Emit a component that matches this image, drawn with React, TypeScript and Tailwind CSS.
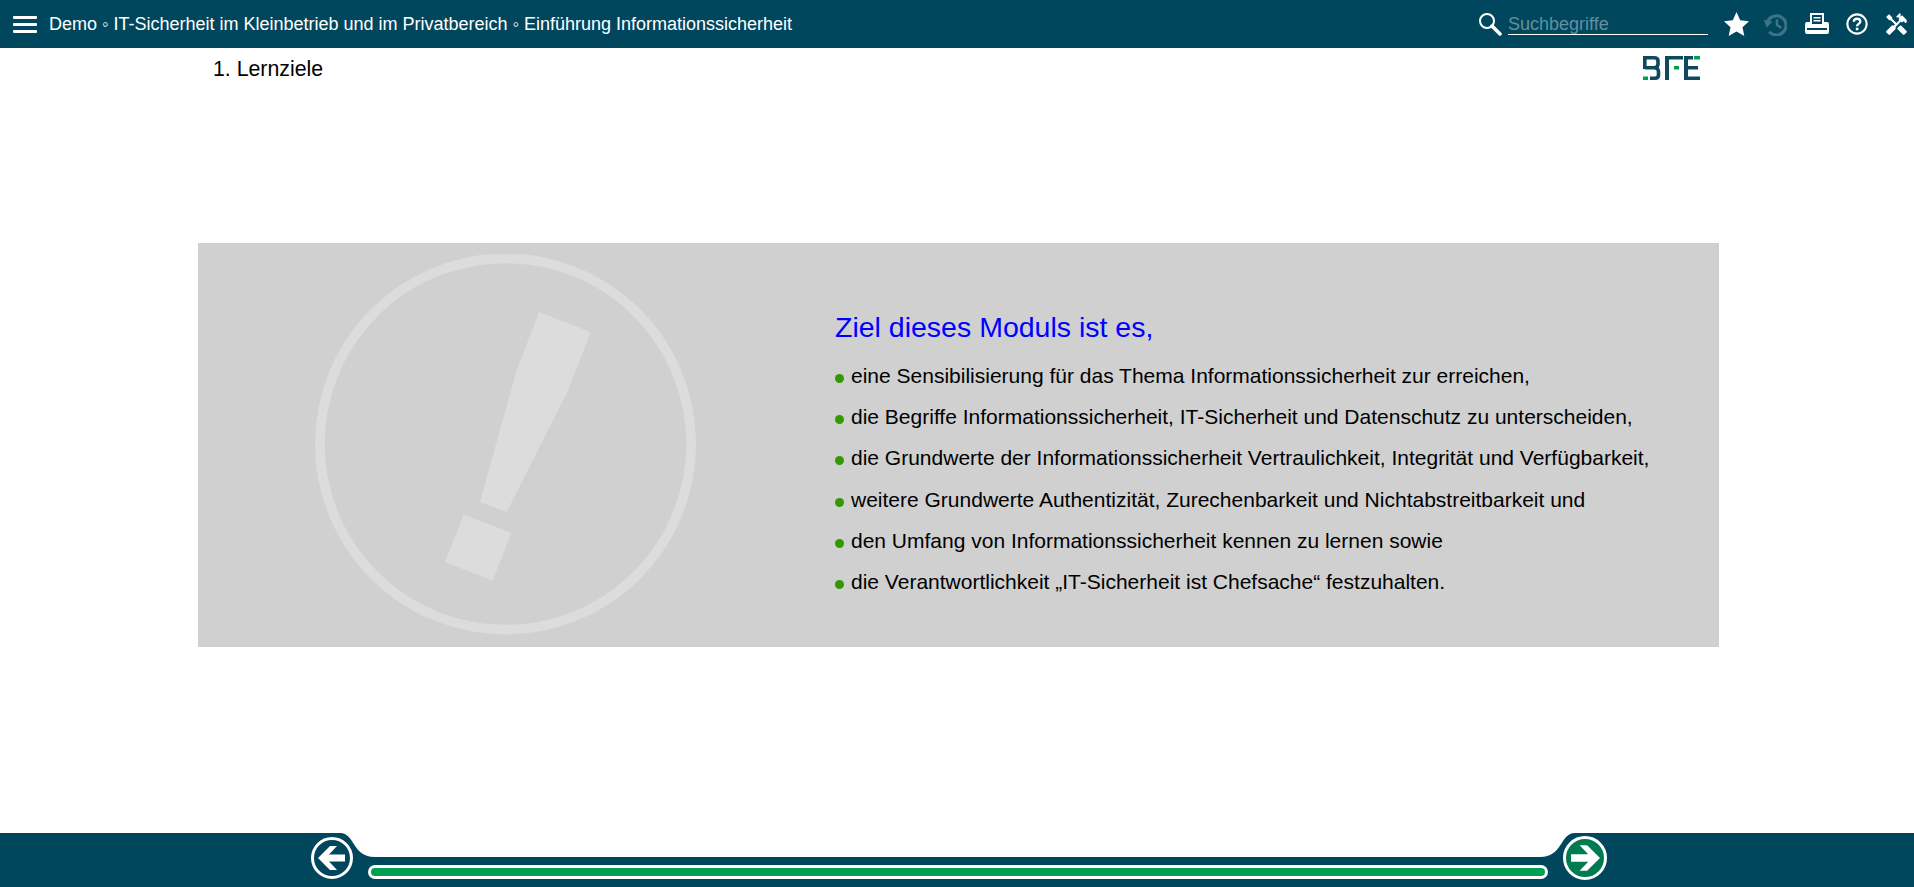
import { MdHandyman } from "react-icons/md";

const goals = [
    "eine Sensibilisierung für das Thema Informationssicherheit zur erreichen,",
    "die Begriffe Informationssicherheit, IT-Sicherheit und Datenschutz zu unterscheiden,",
    "die Grundwerte der Informationssicherheit Vertraulichkeit, Integrität und Verfügbarkeit,",
    "weitere Grundwerte Authentizität, Zurechenbarkeit und Nichtabstreitbarkeit und",
    "den Umfang von Informationssicherheit kennen zu lernen sowie",
    "die Verantwortlichkeit „IT-Sicherheit ist Chefsache“ festzuhalten.",
];

function SearchIcon() {
    return (
        <svg className="w-[24px] h-[24px]" viewBox="0 0 24 24" fill="none" stroke="white">
            <circle cx="9" cy="9" r="7" strokeWidth={2} />
            <path d="M14 14l8 8" strokeWidth={3.5} strokeLinecap="round" />
        </svg>
    );
}

function StarIcon() {
    return (
        <svg className="ml-[16px] w-[25px] h-[24px]" viewBox="0 0 25 24" fill="white">
            <path d="M12.500 0l3.700 8.200 8.800 1-6.500 6 1.800 8.800-7.800-4.500L4.700 24l1.800-8.800-6.500-6 8.800-1z" />
        </svg>
    );
}

function HistoryIcon() {
    return (
        <svg className="ml-[15px] w-[23px] h-[23px]" viewBox="0 0 24 24" fill="none" stroke="#3d7385">
            <path d="M5.500 19.500A10 10 0 1 0 3.800 9" strokeWidth={3.2} />
            <path d="M13.500 6.500v6l4.500 3" strokeWidth={2.600} />
            <polygon points="0,7 9,9 2.500,15.500" fill="#3d7385" stroke="none" />
        </svg>
    );
}

function PrintIcon() {
    return (
        <svg className="ml-[18px] w-[24px] h-[24px]" viewBox="0 0 24 24" fill="white">
            <path fillRule="evenodd" d="M5 1h14v9h3a2 2 0 012 2v8a2 2 0 01-2 2H2a2 2 0 01-2-2v-8a2 2 0 012-2h3V1zm2 2v9h10V3H7zm1.500 2h7v1.500h-7V5zm0 3h7v1.500h-7V8zM2 16v2h20v-2H2z" />
        </svg>
    );
}

function HelpIcon() {
    return (
        <svg className="ml-[17px] w-[22px] h-[22px]" viewBox="0 0 24 24" fill="none" stroke="white">
            <circle cx="12" cy="12" r="10.500" strokeWidth={2.200} />
            <path d="M8.500 9.500c0-2 1.500-3.300 3.600-3.300s3.500 1.200 3.500 3c0 2.700-3.500 2.700-3.500 5.300" strokeWidth={2.600} />
            <rect x="10.700" y="16" width="2.800" height="2.800" fill="white" stroke="none" />
        </svg>
    );
}

function WarningMark() {
    return (
        <svg className="w-[381px] h-[381px] shrink-0" viewBox="75 42 1143 1143">
            <circle cx="646.500" cy="612" r="557" fill="none" stroke="#dcdcdc" strokeWidth={29} />
            <polygon fill="#dcdcdc" points="748,216 902,276 835,450 650,816 570,786 680,390" />
            <polygon fill="#dcdcdc" points="521,824 664,878 608,1022 465,966" />
        </svg>
    );
}

function BfeLogo() {
    return (
        <svg className="w-[58px] h-[24px]" viewBox="0 0 58 24">
            <path
                fill="none"
                stroke="#0d4a5c"
                strokeWidth={3.6}
                d="M1.800 13V1.800H11Q15 1.800 15 5V8Q15 11.800 11 11.800H1.800M11 11.800Q15.500 11.800 15.500 16V19Q15.500 22.200 12 22.200H7"
            />
            <g fill="#0d4a5c">
                <rect x="22" y="0" width="18" height="3.500" />
                <rect x="22" y="0" width="4" height="24" />
                <rect x="41" y="0" width="4" height="24" />
                <rect x="41" y="0" width="9" height="3.500" />
                <rect x="41" y="10" width="14" height="3.500" />
                <rect x="41" y="20.500" width="16" height="3.500" />
            </g>
            <g fill="#00a050">
                <rect x="0" y="20.500" width="5" height="3.500" />
                <rect x="31" y="10" width="5" height="3.500" />
                <rect x="51" y="0" width="6" height="3.500" />
            </g>
        </svg>
    );
}

function NotchCurve({ flip }: { flip?: boolean }) {
    return (
        <svg className={flip ? "w-[40px] h-[24px] shrink-0 -scale-x-100" : "w-[40px] h-[24px] shrink-0"} viewBox="0 0 40 24">
            <path fill="#00475e" d="M0 0h5c15 0 12 24 35 24H0z" />
        </svg>
    );
}

export default function App() {
    return (
        <div className="h-[887px] flex flex-col bg-white overflow-hidden" style={{ fontFamily: '"Liberation Sans", Arial, sans-serif' }}>
            <header className="h-[48px] shrink-0 bg-[#00475e] flex items-center text-white">
                <div className="w-[24px] ml-[13px] flex flex-col gap-[4px]">
                    <span className="h-[3px] bg-white rounded-[1px]" />
                    <span className="h-[3px] bg-white rounded-[1px]" />
                    <span className="h-[3px] bg-white rounded-[1px]" />
                </div>
                <h1 className="ml-[12px] text-[18px] font-normal whitespace-nowrap">
                    Demo ◦ IT-Sicherheit im Kleinbetrieb und im Privatbereich ◦ Einführung Informationssicherheit
                </h1>
                <div className="ml-auto flex items-center">
                    <SearchIcon />
                    <div className="ml-[6px] w-[200px] h-[22px] border-b border-white text-[18px] leading-[22px] text-[#62909f]">
                        Suchbegriffe
                    </div>
                    <StarIcon />
                    <HistoryIcon />
                    <PrintIcon />
                    <HelpIcon />
                    <MdHandyman className="ml-[16px] mr-[5px] w-[25px] h-[25px]" />
                </div>
            </header>

            <main className="flex-1 relative">
                <div className="flex items-start justify-between pl-[213px] pr-[213px]">
                    <p className="mt-[9px] text-[21.300px] leading-[25px] text-black">1. Lernziele</p>
                    <div className="mt-[8px]"><BfeLogo /></div>
                </div>
                <section className="mt-[161px] ml-[198px] w-[1521px] h-[404px] bg-[#d0d0d0] flex">
                    <div className="ml-[117px] mt-[11px] mr-[139px]"><WarningMark /></div>
                    <div className="pt-[68px]">
                        <h2 className="text-[28.500px] leading-[32px] font-normal text-[#0000ff]">Ziel dieses Moduls ist es,</h2>
                        <ul className="mt-[12px] flex flex-col">
                            {goals.map((g) => (
                                <li key={g} className="flex items-center h-[41.300px] text-[21px] text-black whitespace-nowrap">
                                    <span className="w-[9px] h-[9px] mt-[5px] rounded-full bg-[#339900] mr-[7px] shrink-0" />
                                    {g}
                                </li>
                            ))}
                        </ul>
                    </div>
                </section>
            </main>

            <footer className="relative h-[54px] shrink-0">
                <div className="flex h-[24px]">
                    <div className="w-[335px] bg-[#00475e]" />
                    <NotchCurve />
                    <div className="flex-1" />
                    <NotchCurve flip />
                    <div className="w-[334px] bg-[#00475e]" />
                </div>
                <div className="h-[30px] bg-[#00475e] pl-[368px] pr-[366px] pt-[8px]">
                    <div className="h-[14px] rounded-full border-[3px] border-white bg-[#00a050]" />
                </div>
                <button className="absolute left-[311px] top-[4px] w-[42px] h-[42px] rounded-full border-[3px] border-white bg-[#00475e] flex items-center justify-center">
                    <svg className="w-[28px] h-[24px]" viewBox="0 0 28 24" fill="white">
                        <path d="M0 12L12 0h7l-8 8.500h16v7H11l8 8.500h-7z" />
                    </svg>
                </button>
                <button className="absolute left-[1563px] top-[3px] w-[44px] h-[44px] rounded-full border-[3px] border-white bg-[#007a50] flex items-center justify-center">
                    <svg className="w-[30px] h-[26px]" viewBox="0 0 28 24" fill="white">
                        <path d="M28 12L16 0H9l8 8.500H1v7h16L9 24h7z" />
                    </svg>
                </button>
            </footer>
        </div>
    );
}
